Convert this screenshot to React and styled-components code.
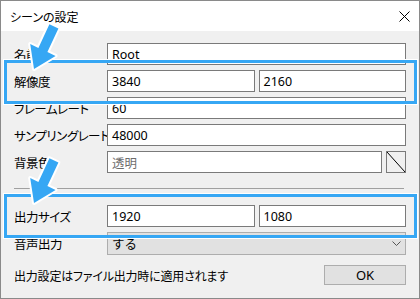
import React from 'react'
import styled, { createGlobalStyle } from "styled-components";

const GlobalStyle = createGlobalStyle`
    html, body {
        margin: 0;
        padding: 0;
        background: #ffffff;
    }
    * {
        box-sizing: border-box;
    }
`

const Window = styled.div`
    position: relative;
    width: 420px;
    height: 299px;
    border: 1px solid #8a8a8a;
    display: flex;
    flex-direction: column;
    font-family: "Noto Sans", "Noto Sans CJK JP", sans-serif;
    color: #000;
    overflow: hidden;
`
const TitleBar = styled.div`
    height: 30px;
    background: #ffffff;
    display: flex;
    align-items: center;
    justify-content: space-between;
    padding: 0 9px 0 9px;
`
const Title = styled.span`
    font-family: "Noto Sans CJK JP", sans-serif;
    font-size: 12px;
    font-feature-settings: "palt";
`
const Body = styled.div`
    flex: 1;
    background: #f0f0f0;
    padding: 12px 13px 0 12px;
    display: flex;
    flex-direction: column;
`
const Rows = styled.div`
    display: flex;
    flex-direction: column;
    gap: 5px;
`
const Row = styled.div`
    display: grid;
    grid-template-columns: 94px 1fr;
    align-items: center;
    height: ${p => p.$h || 22}px;
`
const Label = styled.span`
    font-family: "Noto Sans CJK JP", sans-serif;
    font-size: 12.5px;
    letter-spacing: -0.5px;
    font-feature-settings: "palt";
    white-space: nowrap;
    padding-left: 1px;
`
const Pair = styled.div`
    display: flex;
    gap: 4px;
    height: 100%;
`
const Field = styled.div`
    flex: 1;
    height: 100%;
    background: #ffffff;
    border: 1px solid #7a7a7a;
    display: flex;
    align-items: center;
    padding-left: 4px;
    font-size: 12.5px;
    color: ${p => p.$muted ? '#6d6d6d' : '#000'};
    font-family: "Noto Sans", "Noto Sans CJK JP", sans-serif;
`
const ColorButton = styled.div`
    width: 20px;
    height: 100%;
    border: 1px solid #7a7a7a;
    background: #f0f0f0;
    display: flex;
`
const Separator = styled.div`
    height: 1px;
    background: #a0a0a0;
    margin: 15px 2px 16px 1px;
`
const Select = styled.div`
    height: 100%;
    background: #e1e1e1;
    border: 1px solid #adadad;
    display: flex;
    align-items: center;
    justify-content: space-between;
    padding: 0 4px 0 4px;
    font-family: "Noto Sans CJK JP", sans-serif;
    font-size: 12.5px;
`
const Footer = styled.div`
    margin-top: 10px;
    display: flex;
    align-items: center;
    justify-content: space-between;
`
const Note = styled.span`
    font-family: "Noto Sans CJK JP", sans-serif;
    font-size: 12px;
    letter-spacing: -0.2px;
    font-feature-settings: "palt";
    padding-left: 1px;
`
const OkButton = styled.div`
    width: 82px;
    height: 20px;
    background: #e1e1e1;
    border: 1px solid #adadad;
    display: flex;
    align-items: center;
    justify-content: center;
    font-size: 13px;
`
const Highlight = styled.div`
    position: absolute;
    left: 3px;
    top: ${p => p.$top}px;
    width: 413px;
    height: 44px;
    border: 3px solid #36a7f4;
    box-shadow: 0 0 0 1px #ffffff;
    pointer-events: none;
`
const ArrowLayer = styled.svg`
    position: absolute;
    left: 0;
    top: 0;
    pointer-events: none;
`

const arrowPoints = "48.4,23.3 37.4,46.9 29.2,43.1 33,68 54.6,54.9 46.4,51.1 57.4,27.5"

const App = () => {
    return (
        <>
            <GlobalStyle />
            <Window>
                <TitleBar>
                    <Title>シーンの設定</Title>
                    <svg width="11" height="11" viewBox="0 0 11 11">
                        <path d="M0.5 0.5 L10.5 10.5 M10.5 0.5 L0.5 10.5" stroke="#000" strokeWidth="1" />
                    </svg>
                </TitleBar>
                <Body>
                    <Rows>
                        <Row>
                            <Label>名前</Label>
                            <Field>Root</Field>
                        </Row>
                        <Row>
                            <Label>解像度</Label>
                            <Pair>
                                <Field>3840</Field>
                                <Field>2160</Field>
                            </Pair>
                        </Row>
                        <Row>
                            <Label>フレームレート</Label>
                            <Field>60</Field>
                        </Row>
                        <Row>
                            <Label>サンプリングレート</Label>
                            <Field>48000</Field>
                        </Row>
                        <Row>
                            <Label>背景色</Label>
                            <Pair>
                                <Field $muted>透明</Field>
                                <ColorButton>
                                    <svg width="18" height="20" viewBox="0 0 18 20">
                                        <line x1="0" y1="0" x2="18" y2="20" stroke="#000" strokeWidth="1" />
                                    </svg>
                                </ColorButton>
                            </Pair>
                        </Row>
                    </Rows>
                    <Separator />
                    <Rows>
                        <Row>
                            <Label>出力サイズ</Label>
                            <Pair>
                                <Field>1920</Field>
                                <Field>1080</Field>
                            </Pair>
                        </Row>
                        <Row $h={23}>
                            <Label>音声出力</Label>
                            <Select>
                                <span>する</span>
                                <svg width="9" height="6" viewBox="0 0 9 6">
                                    <polyline points="0.5,0.5 4.5,4.5 8.5,0.5" fill="none" stroke="#555" strokeWidth="1" />
                                </svg>
                            </Select>
                        </Row>
                    </Rows>
                    <Footer>
                        <Note>出力設定はファイル出力時に適用されます</Note>
                        <OkButton>OK</OkButton>
                    </Footer>
                </Body>
                <Highlight $top={59} />
                <Highlight $top={193} />
                <ArrowLayer width="420" height="299" viewBox="0 0 420 299">
                    <polygon points={arrowPoints} fill="#36a7f4" stroke="#ffffff" strokeWidth="4" strokeLinejoin="round" paintOrder="stroke" />
                    <polygon points={arrowPoints} transform="translate(0 134)" fill="#36a7f4" stroke="#ffffff" strokeWidth="4" strokeLinejoin="round" paintOrder="stroke" />
                </ArrowLayer>
            </Window>
        </>
    )
}

export default App
